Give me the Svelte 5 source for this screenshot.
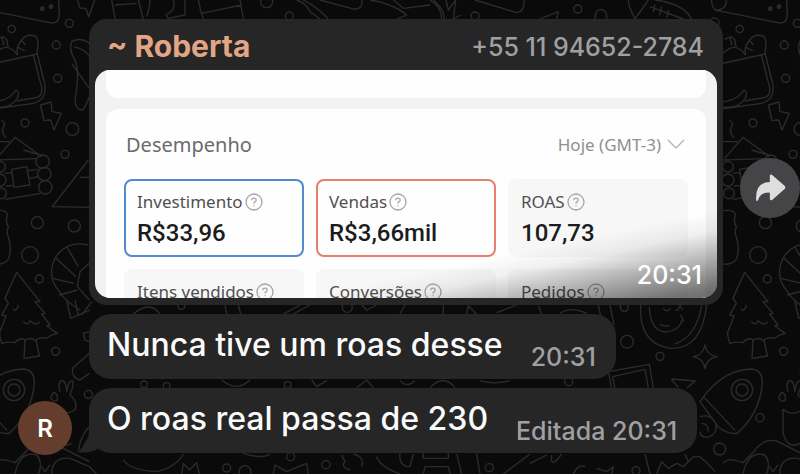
<script lang="ts">
	type Metric = { label: string; value?: string; tone?: 'blue' | 'red' };
	type Message = { text: string; time: string; edited?: boolean };

	const metrics: Metric[] = [
		{ label: 'Investimento', value: 'R$33,96', tone: 'blue' },
		{ label: 'Vendas', value: 'R$3,66mil', tone: 'red' },
		{ label: 'ROAS', value: '107,73' },
		{ label: 'Itens vendidos' },
		{ label: 'Conversões' },
		{ label: 'Pedidos' },
	];

	const messages: Message[] = [
		{ text: 'Nunca tive um roas desse', time: '20:31' },
		{ text: 'O roas real passa de 230', time: '20:31', edited: true },
	];

	// small rings scattered over the wallpaper: x, y, radius
	const rings = [
		[35, 87, 11], [208, 70, 12], [169, 135, 12], [173, 235, 12], [75, 369, 12], [217, 387, 19],
		[195, 463, 12], [112, 668, 18], [223, 678, 18], [90, 765, 25], [118, 837, 12], [167, 1054, 12],
		[96, 1253, 12], [-25, 1347, 18], [265, 1183, 12], [800, 5, 18], [868, 48, 12], [1425, 48, 12],
		[1733, 27, 12], [2143, 68, 14], [1873, 922, 12], [1881, 1025, 19], [1980, 1069, 12],
		[1706, 1145, 12], [680, 1404, 12], [735, 1415, 18], [872, 1370, 12], [978, 1394, 12],
		[1468, 1403, 12], [1908, 1412, 12], [544, 918, 10], [432, 1153, 10], [500, 1158, 10],
		[863, 1155, 10], [1042, 922, 15], [128, 485, 20], [133, 522, 20], [136, 562, 20],
		[0, 500, 16], [0, 540, 18], [3, 580, 16], [42, 1170, 32], [42, 1170, 18],
	];

	const doodles = [
		// cheese and bolts
		'M-50 0Q-47 25-38 30L150 68Q176 74 178 45L176 0M-38 30Q-5 32-5 0',
		'M232 0L240 24L258 26L266 50L284 0',
		'M121 315L153 306L156 335L184 340L162 390L152 360L132 362Z',
		// grocery bag
		'M-14 190L112 162L135 255Q140 300 100 310L-14 326M100 165L125 262Q128 285 112 292L50 303',
		'M52 165Q48 140 65 120Q80 100 105 108Q120 118 110 162M62 122Q72 126 76 136M54 142L74 152',
		'M-10 118L10 110L20 118L24 140M6 112L12 136M-14 160Q22 122 52 165',
		'M-14 305Q30 300 48 270Q62 278 50 298Q30 325-14 322',
		'M5 360Q20 370 8 385Q5 400 18 412M-10 475L45 412L125 470M-14 425L30 425',
		'M268 130Q240 110 215 125Q205 150 225 180Q240 215 225 300Q228 335 250 328Q262 310 268 290M222 140Q260 150 268 170M215 190L268 265',
		// cabin
		'M35 508L80 500L90 555L42 562ZM-14 480L110 476M14 598L122 580M15 520L35 518M82 512L113 508M18 558L42 556M88 535L115 530M70 450L125 466',
		'M265 480L157 620L268 622M240 532L268 532',
		'M-14 632Q20 628 22 645Q15 665 25 680Q18 700 25 710Q35 740 28 770Q20 795-14 792',
		'M265 735Q200 720 165 775Q140 830 175 870Q190 900 240 930M268 790L240 815L232 860L268 900M200 740L235 800M168 775L228 830M158 835L222 850M178 885L232 870',
		// pine tree
		'M50 817L15 895L25 910L5 945L18 948L-2 1000L5 1030Q30 1024 45 1028Q60 1010 75 1020Q95 1010 105 1022Q120 1008 140 1015Q150 1005 172 1000L140 978L150 975L125 942L135 940L105 905L120 905ZM75 1020L72 1075L118 1068L108 1018M40 925Q48 940 55 915M70 965Q85 980 90 962Q110 980 118 965',
		'M200 900L212 955L270 930M225 900L235 948M245 945L275 905M268 1060L218 1105Q212 1130 240 1140L268 1120M268 995L250 1000L255 1020L268 1025',
		// rocket
		'M-84 1205Q-20 1110 70 1107Q105 1110 103 1150Q95 1240 28 1300Q0 1304-30 1280ZM-72 1192L22 1292M-84 1250Q-50 1240-36 1272Q-30 1300-60 1312Q-85 1312-84 1295M-80 1270Q-58 1270-60 1295',
		'M-69 1035Q-64 1065-33 1070Q-64 1075-69 1106Q-74 1075-104 1070Q-74 1065-69 1035Z',
		'M180 1175Q172 1140 188 1142Q200 1150 200 1175Q205 1140 218 1143Q222 1155 210 1185Q235 1205 225 1230Q190 1250 165 1228L165 1300Q180 1350 215 1330M160 1178Q175 1180 172 1200Q160 1210 152 1192Z',
		'M-14 1390Q0 1370 45 1388L80 1352Q110 1310 150 1325L268 1385M45 1422Q60 1350 110 1365Q130 1390 115 1422M125 1400L135 1415L150 1395M155 1422Q155 1370 210 1375L268 1400L290 1422',
		'M235 1350Q245 1300 268 1280M245 1350L268 1310',
		// top strip
		'M335 0L345 57M345 15L410 10M415 0L430 57M450 0Q448 30 440 50M520 0Q530 30 498 45L505 55L555 45L555 0M595 0Q600 30 610 57M605 40L725 15M720 0L730 57',
		'M890 0Q920 10 930 35L960 57M910 0Q950 20 985 57M960 0L1065 28Q1090 25 1085 0M1110 0Q1180 10 1220 45L1190 57M1180 0L1210 25L1290 15M1290 0Q1325 20 1325 57M1300 0Q1335 30 1332 57M1338 0L1345 30L1367 0L1360 57L1382 45',
		'M1425 0L1550 38Q1575 35 1572 0M1620 57L1675 35L1670 57M1785 57Q1785 28 1803 28Q1822 30 1820 57',
		'M1885 0Q1885 20 1905 57L1945 0M1965 0Q2050 10 2075 57M1950 20L2050 57M1965 14L1960 36M1985 20L1978 46M2006 30L2000 52',
		// strips between the bubbles
		'M400 942Q450 900 480 942M675 915L680 942M715 915L722 942M850 942L900 915M880 942L930 915M1085 915L1100 930L1130 915M1200 942L1215 915M1330 942L1330 915M1400 942L1405 918L1430 942M1490 938L1550 915M1615 918L1625 942M1680 940Q1710 918 1760 940M1795 915L1805 965M1830 915L1842 975',
		'M665 1140Q710 1178 750 1140M935 1140L950 1160L980 1142M1070 1163L1100 1140L1120 1163M1200 1142Q1220 1165 1245 1142M1290 1163Q1330 1120 1365 1163M1440 1142Q1480 1155 1530 1142',
		// coin and picture frame
		'M1922 915Q1915 1030 2010 1045Q2105 1050 2120 915M2105 915Q2090 1010 2025 1032M1948 920Q1950 990 1995 996Q2040 992 2045 960M1980 972Q1995 982 2010 976M1990 925Q2000 940 2012 925M2025 930Q2035 935 2040 915L2048 930M2042 945L2052 965',
		'M1825 1115L1948 1093L1960 1165M1825 1115L1835 1165M1838 1130L1935 1108L1945 1163M1838 1130L1845 1165M2014 1137L2086 1143L2060 1165M2014 1137L2035 1163',
		// bottom strip
		'M370 1380Q390 1410 470 1415Q530 1400 550 1362M545 1422L550 1390L568 1410L590 1388L598 1422M730 1360Q790 1378 810 1362M820 1422L825 1395L860 1415L920 1390L925 1422',
		'M1025 1365L1035 1385Q1020 1400 1050 1410M1060 1362Q1095 1370 1085 1400M1130 1370Q1140 1400 1200 1422M1200 1360Q1195 1400 1230 1400L1240 1362M1270 1360L1270 1375L1345 1375L1345 1360M1270 1422L1275 1400L1345 1400L1350 1422M1370 1362L1385 1422M1430 1360L1440 1422M1510 1422L1590 1362',
		'M1590 1390L1640 1365M1655 1365Q1650 1410 1685 1362M1720 1422Q1735 1390 1755 1400M1790 1405L1820 1415L1840 1400L1835 1422M1935 1362L1950 1422M1970 1422L1985 1385L2005 1405L2030 1390L2050 1400L2080 1370L2100 1370Q2125 1390 2145 1415M2055 1362L2065 1385',
	];
</script>

{#snippet help()}
	<svg class="help" viewBox="0 0 18 18" aria-hidden="true">
		<circle cx="9" cy="9" r="8" />
		<path d="M6.8 7.2Q6.9 5.2 9 5.2T11.2 7.1Q11.2 8.2 10 8.9T9 10.6M9 12.2V13.2" />
	</svg>
{/snippet}

<div class="chat">
	<svg class="wallpaper" aria-hidden="true">
		<defs>
			<pattern id="doodles" width="2184" height="1422" patternUnits="userSpaceOnUse" patternTransform="scale(0.33333)">
				{#each [0, 2184] as shift}
					<g transform="translate({shift} 0)">
						{#each doodles as d}
							<path {d} />
						{/each}
						{#each rings as [cx, cy, r]}
							<circle {cx} {cy} {r} />
						{/each}
						<circle class="dot" cx="127" cy="26" r="5" />
						<circle class="dot" cx="153" cy="20" r="5" />
					</g>
				{/each}
			</pattern>
		</defs>
		<rect width="100%" height="100%" fill="url(#doodles)" />
	</svg>

	<button class="avatar" aria-label="Roberta">R</button>

	<div class="thread">
		<div class="row">
			<article class="bubble media">
				<header class="sender">
					<span class="name">~ Roberta</span>
					<span class="phone">+55 11 94652-2784</span>
				</header>
				<div class="photo">
					<div class="panel previous"></div>
					<section class="panel">
						<div class="panel-head">
							<span class="panel-title">Desempenho</span>
							<span class="period">
								Hoje (GMT-3)
								<svg class="chevron" viewBox="0 0 18 12" aria-hidden="true"><path d="M1 2L9 10L17 2" /></svg>
							</span>
						</div>
						<div class="metrics">
							{#each metrics as metric (metric.label)}
								<div class="metric {metric.tone ?? ''}">
									<div class="label">{metric.label}{@render help()}</div>
									{#if metric.value}
										<div class="value">{metric.value}</div>
									{/if}
								</div>
							{/each}
						</div>
					</section>
					<time class="stamp">20:31</time>
				</div>
			</article>
			<button class="forward" aria-label="Encaminhar">
				<svg viewBox="0 0 92 84" aria-hidden="true">
					<path d="M3 79Q-1 25 44 24V5Q45-1 51 3L89 36Q92 40 89 44L51 78Q45 81 44 75V56Q16 54 9 78Q5 84 3 79Z" />
				</svg>
			</button>
		</div>

		{#each messages as message, i (message.text)}
			<article class="bubble text" class:tail={i === messages.length - 1}>
				<p>{message.text}</p>
				<span class="meta">{message.edited ? 'Editada ' : ''}<time>{message.time}</time></span>
			</article>
		{/each}
	</div>
</div>

<style>
	:global(body) {
		margin: 0;
		background: #0a0a0a;
	}

	.chat {
		position: relative;
		display: flex;
		align-items: flex-end;
		gap: 17px;
		box-sizing: border-box;
		min-height: 100vh;
		padding: 19px 0 19px 18px;
		overflow: hidden;
		font-family: Inter, "Liberation Sans", sans-serif;
	}

	.wallpaper {
		position: absolute;
		inset: 0;
		width: 100%;
		height: 100%;
		fill: none;
		stroke: #2b2b2b;
		stroke-width: 4;
		stroke-linejoin: round;
	}

	.wallpaper rect {
		stroke: none;
	}

	.dot {
		fill: #2b2b2b;
	}

	button {
		position: relative;
		flex: none;
		padding: 0;
		border: 0;
		border-radius: 50%;
		font-family: inherit;
	}

	.avatar {
		width: 54px;
		height: 54px;
		background: #643d2c;
		color: #fff;
		font-size: 24px;
		font-weight: 600;
	}

	.thread {
		position: relative;
		flex: 1;
		align-self: flex-start;
		min-width: 0;
		display: flex;
		flex-direction: column;
		align-items: flex-start;
		gap: 9px;
	}

	.row {
		display: flex;
		align-items: center;
		gap: 17px;
		width: 100%;
	}

	.bubble {
		position: relative;
		background: #262626;
		border-radius: 22px;
	}

	.media {
		flex: 1;
		min-width: 0;
		padding: 0 6px 7px;
		border-radius: 18px;
	}

	.sender {
		display: flex;
		align-items: center;
		justify-content: space-between;
		height: 51px;
		padding: 2px 13px 0 12px;
		box-sizing: border-box;
	}

	.name {
		color: #e2a585;
		font-size: 30px;
		font-weight: 700;
	}

	.phone {
		color: #a0a0a3;
		font-size: 25px;
		font-weight: 500;
		padding-top: 2px;
	}

	/* shared screenshot */
	.photo {
		position: relative;
		height: 228px;
		padding: 0 11px;
		overflow: hidden;
		border-radius: 15px;
		background: #f2f2f2;
		font-family: "Noto Sans", sans-serif;
	}

	.photo::after {
		content: '';
		position: absolute;
		inset: 0;
		background: linear-gradient(168deg, transparent calc(100% - 86px), rgba(0, 0, 0, 0.06) calc(100% - 66px), rgba(0, 0, 0, 0.3) calc(100% - 38px), rgba(0, 0, 0, 0.52) calc(100% - 12px), rgba(0, 0, 0, 0.58));
	}

	.panel {
		padding: 18px;
		border-radius: 12px;
		background: #fefefe;
	}

	.previous {
		height: 28px;
		padding: 0;
		margin-bottom: 11px;
		border-radius: 0 0 12px 12px;
	}

	.panel-head {
		display: flex;
		align-items: center;
		justify-content: space-between;
		height: 34px;
		padding: 0 3px 0 2px;
		margin-bottom: 18px;
		color: #6b6b6b;
		font-size: 20px;
	}

	.period {
		display: flex;
		align-items: center;
		gap: 6px;
		color: #909090;
		font-size: 17px;
	}

	.chevron {
		width: 18px;
		height: 12px;
		fill: none;
		stroke: #b5b5b5;
		stroke-width: 1.4;
	}

	.metrics {
		display: grid;
		grid-template-columns: repeat(3, minmax(0, 1fr));
		gap: 12px;
	}

	.metric {
		box-sizing: border-box;
		height: 78px;
		padding: 10px 11px;
		border: 2px solid #f7f7f7;
		border-radius: 8px;
		background: #f7f7f7;
	}

	.metric.blue {
		border-color: #5389d0;
		background: #fefefe;
	}

	.metric.red {
		border-color: #e87f6c;
		background: #fefefe;
	}

	.label {
		display: flex;
		align-items: center;
		gap: 2px;
		color: #505050;
		font-size: 17px;
		line-height: 22px;
		white-space: nowrap;
	}

	.help {
		width: 18px;
		height: 18px;
		fill: none;
		stroke: #a5a5a5;
		stroke-width: 1.3;
	}

	.value {
		margin-top: 4px;
		color: #1c1c1c;
		font-family: Roboto, sans-serif;
		font-size: 24px;
		font-weight: 500;
		line-height: 32px;
	}

	.stamp {
		position: absolute;
		right: 15px;
		bottom: 8px;
		z-index: 1;
		color: #fff;
		font-family: Inter, sans-serif;
		font-size: 25px;
		font-weight: 500;
		line-height: 30px;
	}

	.forward {
		width: 60px;
		height: 60px;
		margin-top: 52px;
		background: #454547;
	}

	.forward svg {
		width: 31px;
		height: 28px;
		display: block;
		margin: 0 auto;
		fill: #dedede;
	}

	/* text messages */
	.text {
		display: flex;
		align-items: flex-end;
		gap: 28px;
		height: 65px;
		padding: 4px 20px 7px 18px;
		box-sizing: border-box;
	}

	.text p {
		margin: 0;
		align-self: center;
		color: #fafafa;
		font-size: 32px;
		font-weight: 500;
		line-height: 40px;
	}

	.meta {
		color: #a0a0a3;
		font-size: 25px;
		font-weight: 500;
		line-height: 30px;
		white-space: nowrap;
	}

	.tail::before {
		content: '';
		position: absolute;
		left: -12px;
		bottom: 0;
		width: 34px;
		height: 24px;
		background: #262626;
		clip-path: path('M12 0Q12 16 0 23Q14 25 22 19Q27 23 34 24V0Z');
	}
</style>
